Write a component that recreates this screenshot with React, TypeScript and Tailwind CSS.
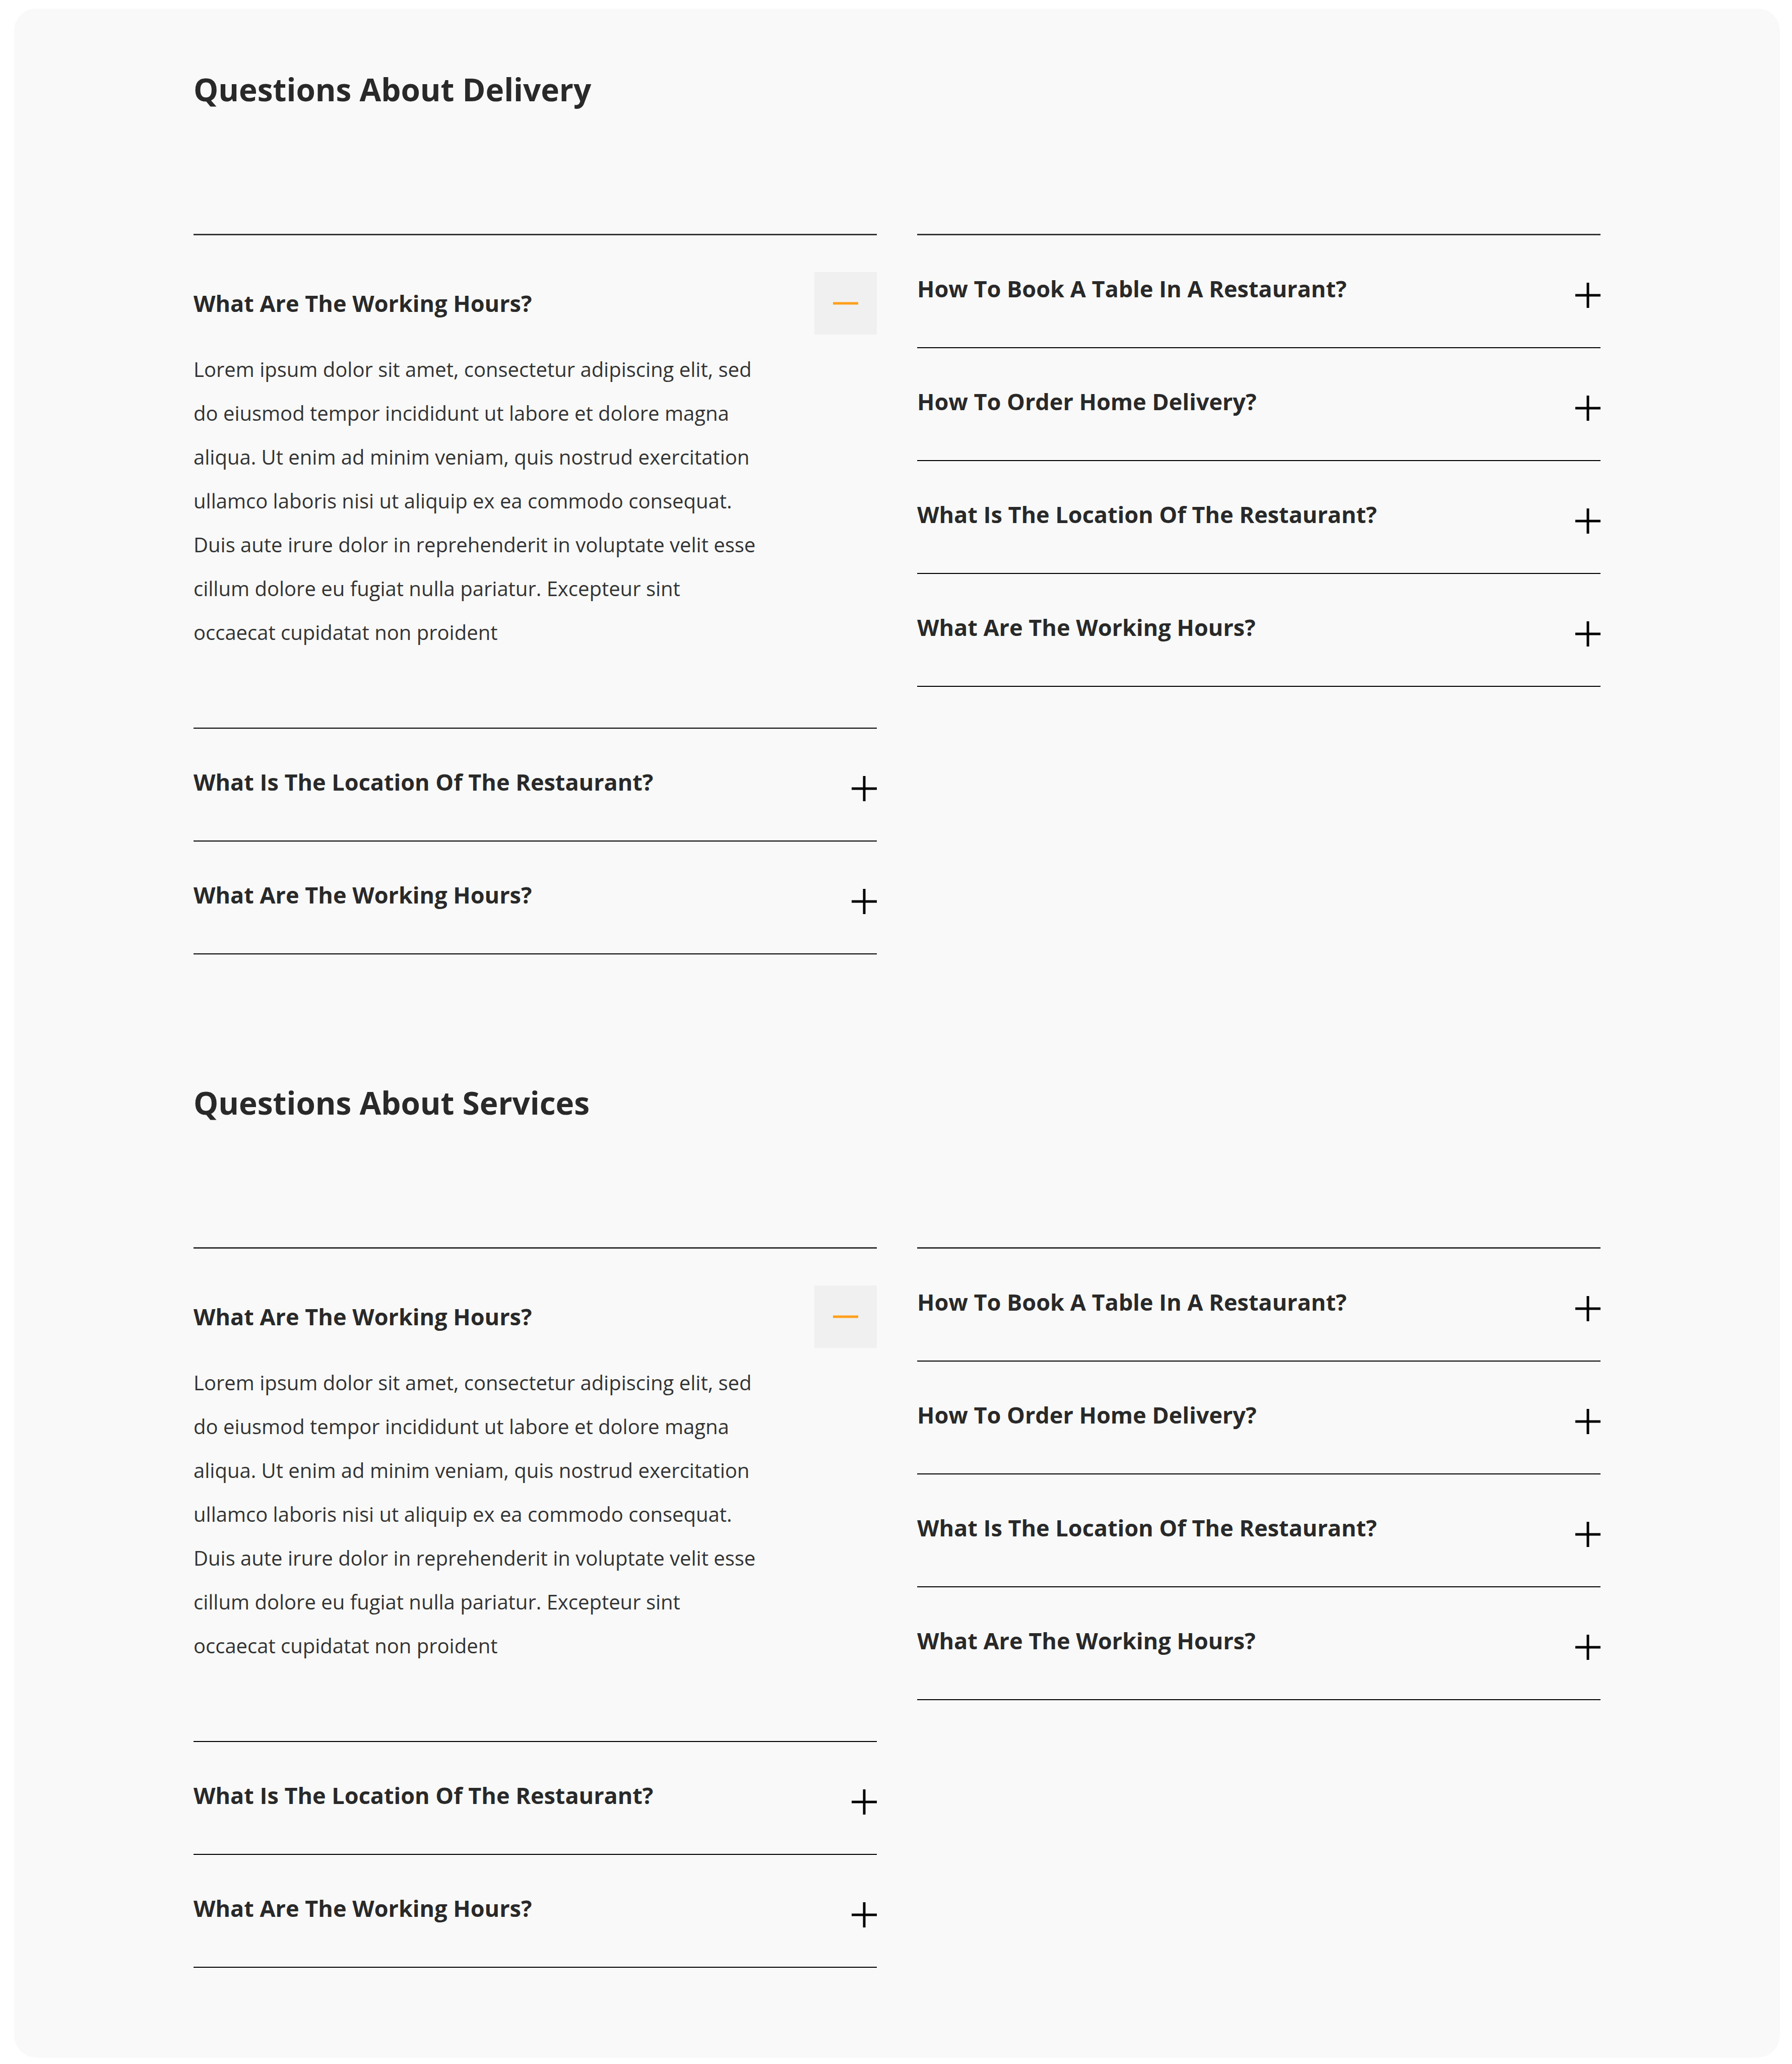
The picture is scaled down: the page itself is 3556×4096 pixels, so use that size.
import { useState } from "react";

const ANSWER =
  "Lorem ipsum dolor sit amet, consectetur adipiscing elit, sed do eiusmod tempor incididunt ut labore et dolore magna aliqua. Ut enim ad minim veniam, quis nostrud exercitation ullamco laboris nisi ut aliquip ex ea commodo consequat. Duis aute irure dolor in reprehenderit in voluptate velit esse cillum dolore eu fugiat nulla pariatur. Excepteur sint occaecat cupidatat non proident";

type Question = { title: string; open?: boolean };

const LEFT: Question[] = [
  { title: "What Are The Working Hours?", open: true },
  { title: "What Is The Location Of The Restaurant?" },
  { title: "What Are The Working Hours?" },
];

const RIGHT: Question[] = [
  { title: "How To Book A Table In A Restaurant?" },
  { title: "How To Order Home Delivery?" },
  { title: "What Is The Location Of The Restaurant?" },
  { title: "What Are The Working Hours?" },
];

function PlusIcon() {
  return (
    <svg className="size-[50px] shrink-0" viewBox="0 0 50 50" aria-hidden="true">
      <path d="M0 25H50M25 0V50" stroke="#000000" strokeWidth="5" fill="none" />
    </svg>
  );
}

function MinusIcon() {
  return (
    <span className="flex size-[124px] shrink-0 items-center justify-center bg-[#f0f0f0]">
      <svg className="size-[50px]" viewBox="0 0 50 50" aria-hidden="true">
        <path d="M0 25H50" stroke="#ff9f1c" strokeWidth="5" fill="none" />
      </svg>
    </span>
  );
}

function Item({ question, id }: { question: Question; id: string }) {
  const [open, setOpen] = useState(Boolean(question.open));
  return (
    <li className={open ? "border-b-2 border-black pt-[73px] pb-[146px]" : "border-b-2 border-black pt-[68px] pb-[78px]"}>
      <h3>
        <button
          type="button"
          aria-expanded={open}
          aria-controls={id}
          onClick={() => setOpen(!open)}
          className={
            open
              ? "flex w-full cursor-pointer items-center justify-between text-left"
              : "flex w-full cursor-pointer items-end justify-between text-left"
          }
        >
          <span className="text-[45px] leading-[76px] font-bold">{question.title}</span>
          {open ? <MinusIcon /> : <PlusIcon />}
        </button>
      </h3>
      {open && (
        <p id={id} className="mt-[25px] max-w-[1132px] text-[40px] leading-[87px] text-[#333333]">
          {ANSWER}
        </p>
      )}
    </li>
  );
}

function Column({ questions, id }: { questions: Question[]; id: string }) {
  return (
    <ul className="min-w-0 flex-1 border-t-3 border-[#363636]">
      {questions.map((question, index) => (
        <Item key={index} question={question} id={`${id}-${index}`} />
      ))}
    </ul>
  );
}

function Section({ title, id }: { title: string; id: string }) {
  return (
    <section aria-labelledby={id}>
      <h2 id={id} className="mb-[242px] text-[62px] leading-[90px] font-bold">
        {title}
      </h2>
      <div className="flex items-start gap-20">
        <Column questions={LEFT} id={`${id}-left`} />
        <Column questions={RIGHT} id={`${id}-right`} />
      </div>
    </section>
  );
}

export default function App() {
  return (
    <div className="bg-white pt-[17px] pr-6 pb-[13px] pl-7 font-['Open_Sans',sans-serif] text-[#292929]">
      <main className="flex flex-col gap-[249px] rounded-[44px] bg-[#f9f9f9] px-[356px] pt-[115px] pb-[178px]">
        <Section title="Questions About Delivery" id="delivery" />
        <Section title="Questions About Services" id="services" />
      </main>
    </div>
  );
}
